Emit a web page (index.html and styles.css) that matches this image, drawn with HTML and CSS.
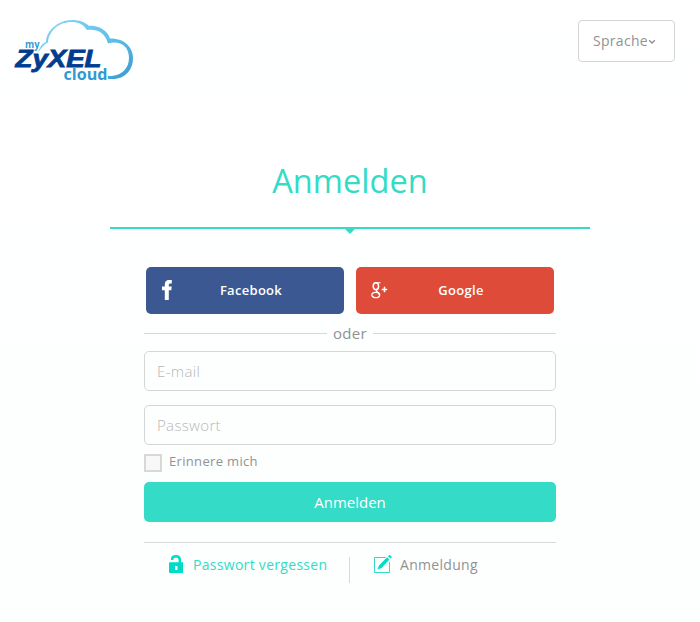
FILE: index.html
```html
<!DOCTYPE html>
<html lang="de">
<head>
<meta charset="utf-8">
<title>myZyXELcloud</title>
<link rel="stylesheet" href="styles.css">
</head>
<body>
<header class="top">
  <svg class="logo" viewBox="12 16 124 68" role="img" aria-label="myZyXELcloud">
    <defs>
      <linearGradient id="sky" x1="0" y1="0" x2="1" y2="1">
        <stop offset="0" stop-color="#8ad4f2"/>
        <stop offset=".5" stop-color="#62c3eb"/>
        <stop offset="1" stop-color="#399bd0"/>
      </linearGradient>
    </defs>
    <path fill="url(#sky)" d="M38 53C40 46 43 43 46 42C46 31 58 20 72 20C79 20 85 22 89 26C98 25 107 30 110 38.500C124 38 133 47 133 58C133 70 125 79 113 79H108V76H112C122 75 129 68 129 58C129 47 121 40 108 43.500C105 33 98 29 87 30C83 24 78 22 72 22C58 22 49 31 48 42.500C44 44 41 48 38 53Z"/>
    <text class="logo-my" x="25" y="48" textLength="14.500" lengthAdjust="spacingAndGlyphs">my</text>
    <text class="logo-zyxel" x="15.500" y="66.500" textLength="86" lengthAdjust="spacingAndGlyphs">ZyXEL</text>
    <text class="logo-cloud" x="63.500" y="79.500" textLength="44" lengthAdjust="spacingAndGlyphs">cloud</text>
  </svg>
  <button class="language"><span>Sprache</span><svg class="chevron" viewBox="0 0 8 6"><path d="M1.200 1.200L4 4L6.800 1.200"/></svg></button>
</header>
<main class="login">
  <h1 class="title">Anmelden</h1>
  <div class="rule"></div>
  <form class="form">
    <div class="social">
      <button type="button" class="provider facebook">
        <svg class="provider-icon" viewBox="0 0 18 24"><path fill="#fff" d="M3.800 22V12.200H1V8.500H3.800V6.500Q3.800 2 8 2H10.800V5.500H9Q7.800 5.500 7.800 7V8.500H10.700L10.300 12.200H7.800V22Z"/></svg>
        <span>Facebook</span>
      </button>
      <button type="button" class="provider google">
        <svg class="provider-icon" viewBox="0 0 18 24"><g fill="none" stroke="#fff"><ellipse cx="4.900" cy="8.300" rx="2.700" ry="3.500" stroke-width="1.500"/><path stroke-width="1.100" d="M4.900 4.700H9.500M6.500 11.500Q4.300 12.500 6 14"/><ellipse cx="4.700" cy="17" rx="3.900" ry="2.700" stroke-width="1.300"/><path stroke-width="1.500" d="M5.500 13.300Q8.500 15 8.600 17"/><path stroke-width="1.500" d="M10.800 11.500H16.200M13.500 8.800V14.200"/></g></svg>
        <span>Google</span>
      </button>
    </div>
    <div class="divider">oder</div>
    <input class="field" type="email" placeholder="E-mail">
    <input class="field" type="password" placeholder="Passwort">
    <label class="remember"><span class="box"></span><span>Erinnere mich</span></label>
    <button type="button" class="submit">Anmelden</button>
    <nav class="links">
      <a class="forgot"><svg class="lock" viewBox="0 0 16 20"><path fill="none" stroke="#00dcc7" stroke-width="2.400" d="M4.200 6V5Q4.200 2.200 8 2.200Q11.800 2.200 11.800 5.500V9"/><path fill="#00dcc7" fill-rule="evenodd" d="M1 9Q1 8.300 2 8.300H15V19H2Q1 19 1 18ZM7 12V16H9.500V12Z"/></svg><span>Passwort vergessen</span></a>
      <a class="signup"><svg class="pencil" viewBox="0 0 20 20"><path fill="none" stroke="#35dac6" d="M12.500 3.500H1.500V18.500H16.500V8"/><path fill="#00dcc7" d="M4.500 15.500L6 11.500L14 3.300L16.500 5.500L8.500 14ZM15 2.300L16.500 .8L19 3L17.500 4.500Z"/></svg><span>Anmeldung</span></a>
    </nav>
  </form>
</main>
</body>
</html>
```
FILE: styles.css
```css
* { box-sizing: border-box; }
body {
  margin: 0;
  height: 622px;
  overflow: hidden;
  background: linear-gradient(#fff, #fcfffe);
  color: #929292;
  font-family: "Open Sans", "Noto Sans", sans-serif;
}
button, input { font: inherit; margin: 0; }
svg { display: block; flex: none; }
.top {
  display: flex;
  justify-content: space-between;
  align-items: flex-start;
  padding: 16px 25px 0 12px;
  height: 160px;
}
.logo { width: 124px; height: 68px; }
.logo text { font-weight: 700; }
.logo-my { font-size: 10.5px; fill: #369bd2; }
.logo-zyxel { font: italic 700 23.5px "Liberation Sans", sans-serif; fill: #003d90; stroke: #003d90; stroke-width: .8px; }
.logo-cloud { font-size: 15.5px; fill: #3099d1; }
.language {
  display: flex;
  align-items: center;
  width: 97px;
  height: 42px;
  margin-top: 4px;
  padding: 0 0 1px 14px;
  border: 1px solid #d5d5d8;
  border-radius: 4px;
  background: #fff;
  color: #929292;
  font-size: 14px;
  letter-spacing: .3px;
}
.chevron { width: 8px; height: 6px; margin-top: 3px; }
.chevron path { fill: none; stroke: #8c8c8c; stroke-width: 1.3; }
.login { width: 480px; margin: 0 auto; }
.title {
  margin: 0;
  height: 67px;
  line-height: 42px;
  text-align: center;
  font-size: 32.6px;
  font-weight: 400;
  color: #34dbc6;
}
.rule { position: relative; height: 2px; background: #34dbc6; }
.rule::after {
  content: "";
  position: absolute;
  top: 2px;
  left: 235px;
  border: 5px solid transparent;
  border-top-color: #34dbc6;
  border-bottom: 0;
}
.form { width: 412px; margin: 38px auto 0; }
.social { display: flex; gap: 12px; padding: 0 2px; }
.provider {
  display: flex;
  align-items: center;
  width: 198px;
  height: 47px;
  padding: 0 0 2px;
  border: 0;
  border-radius: 5px;
  color: #fff;
  font-size: 13px;
  font-weight: 600;
  letter-spacing: .3px;
}
.provider-icon { width: 18px; height: 24px; margin-left: 15px; }
.provider span { flex: 1; padding-right: 21px; text-align: center; }
.facebook { background: #3b5892; }
.google { background: #de4c39; }
.divider {
  display: flex;
  align-items: center;
  gap: 6px;
  height: 37px;
  font-size: 15px;
  letter-spacing: .3px;
}
.divider::before, .divider::after { content: ""; flex: 1; height: 1px; margin-top: 2px; background: #d5d9d8; }
.field {
  display: block;
  width: 100%;
  height: 40px;
  margin-bottom: 14px;
  padding: 0 12px;
  border: 1px solid #d4d7d6;
  border-radius: 5px;
  background: #fdffff;
  font-size: 15px;
  letter-spacing: .35px;
}
.field::placeholder { color: #b4b8b7; opacity: 1; font-weight: 300; }
.remember {
  display: flex;
  gap: 7px;
  height: 37px;
  margin-top: -10px;
  padding-top: 1px;
  font-size: 13px;
  line-height: 22px;
  letter-spacing: .33px;
}
.box { width: 18px; height: 18px; margin-top: 4px; border: 2px solid #d8d8d8; background: #f8f8f8; }
.submit {
  display: block;
  width: 100%;
  height: 40px;
  margin-top: -4px;
  padding: 0;
  border: 0;
  border-radius: 5px;
  background: #34dbc6;
  color: #fff;
  font-size: 15px;
  font-weight: 500;
}
.links {
  display: flex;
  margin-top: 20px;
  padding: 14px 0 0 24px;
  border-top: 1px solid #d5d9d8;
  font-size: 14px;
  line-height: 16px;
  letter-spacing: .3px;
}
.forgot, .signup { display: flex; height: 26px; }
.forgot { width: 182px; border-right: 1px solid #d5d9d8; color: #34dbc6; white-space: nowrap; }
.signup { padding-left: 23px; }
.lock { width: 16px; height: 20px; margin-top: -3px; }
.forgot span { margin-left: 9px; }
.pencil { width: 20px; height: 20px; margin-top: -3px; }
.signup span { margin-left: 7px; }
```
